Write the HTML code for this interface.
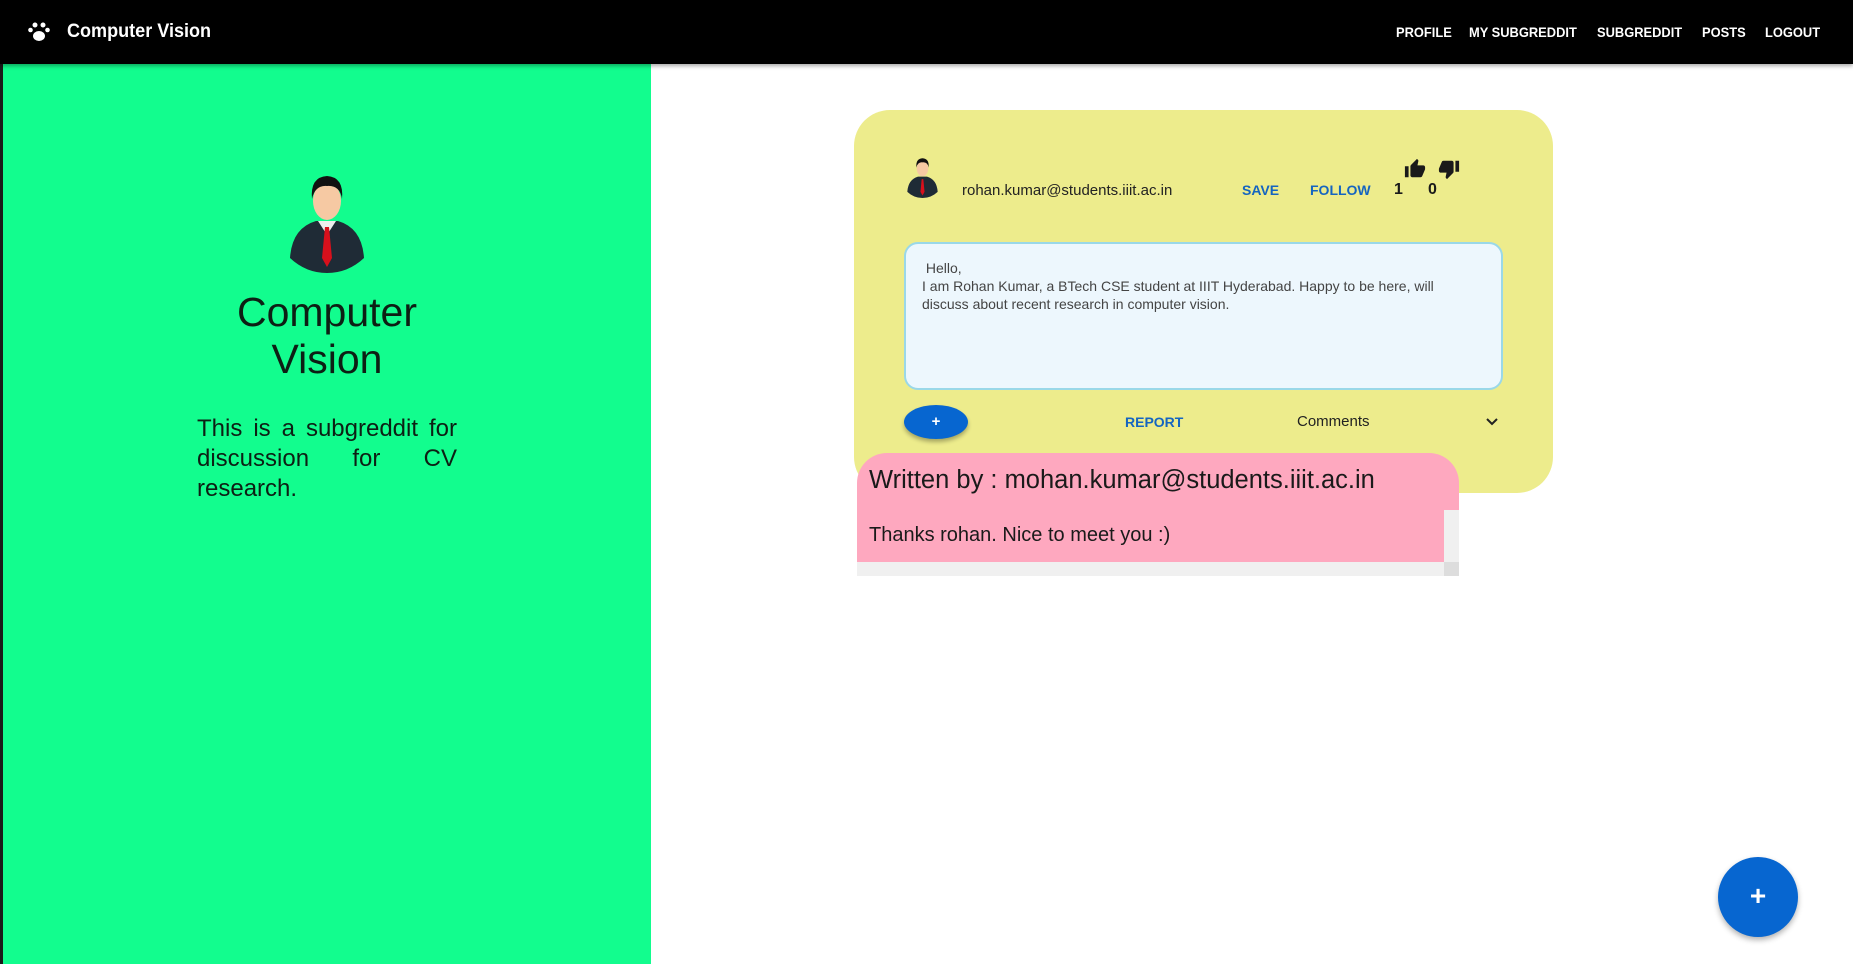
<!DOCTYPE html>
<html><head><meta charset="utf-8"><style>
*{margin:0;padding:0;box-sizing:border-box}
body{width:1853px;height:964px;overflow:hidden;background:#fff;font-family:"Liberation Sans",sans-serif;position:relative}
.a{position:absolute;white-space:nowrap}
#hdr{position:absolute;left:0;top:0;width:1853px;height:64px;background:#000;box-shadow:0 2px 4px rgba(0,0,0,.35);z-index:2}
#hdr .n{position:absolute;top:24px;color:#fff;font-size:14px;font-weight:bold;transform:scaleX(.92);transform-origin:left}
#left{position:absolute;left:0;top:64px;width:651px;height:900px;background:#12fd8e;border-left:3px solid #1a1a1a}
.btn{color:#1565c0;font-size:14px;font-weight:bold}
</style></head><body>
<div id="hdr">
 <svg class="a" style="left:28px;top:21px" width="22" height="21" viewBox="0 0 22 21"><ellipse cx="11" cy="15" rx="6" ry="5" fill="#fff"/><circle cx="7" cy="4" r="2.5" fill="#fff"/><circle cx="15" cy="4" r="2.5" fill="#fff"/><circle cx="2.5" cy="9" r="2.3" fill="#fff"/><circle cx="19.5" cy="9" r="2.3" fill="#fff"/></svg>
 <div class="a" style="left:67px;top:21px;color:#fff;font-size:19px;font-weight:bold;transform:scaleX(.95);transform-origin:left">Computer Vision</div>
 <div class="n" style="left:1396px">PROFILE</div>
 <div class="n" style="left:1469px">MY SUBGREDDIT</div>
 <div class="n" style="left:1597px">SUBGREDDIT</div>
 <div class="n" style="left:1702px">POSTS</div>
 <div class="n" style="left:1765px">LOGOUT</div>
</div>
<div id="left"></div>
<svg class="a" style="left:288px;top:173px" width="78" height="100" viewBox="0 0 78 100">
 <path d="M2 85 Q4 55 28 48 L50 48 Q74 55 76 85 Q60 100 39 100 Q18 100 2 85Z" fill="#1f2b36"/>
 <path d="M30 48 L39 62 L48 48Z" fill="#eee"/>
 <path d="M37 54 L41 54 L44 85 L39 94 L34 85Z" fill="#d8101c"/>
 <ellipse cx="39" cy="28" rx="14" ry="19" fill="#f6c9a3"/>
 <path d="M24 26 Q22 4 39 3 Q56 4 54 26 Q52 12 39 13 Q27 12 24 26Z" fill="#111"/>
</svg>
<div class="a" style="left:3px;width:648px;top:289px;text-align:center;font-size:41px;line-height:47px;color:#0d1f14;white-space:normal">Computer<br>Vision</div>
<div class="a" style="left:197px;top:414px;width:260px;font-size:24px;line-height:30px;color:#0d1f14;white-space:normal;text-align:justify">This is a subgreddit for discussion for CV research.</div>

<div class="a" style="left:854px;top:110px;width:699px;height:383px;background:#edec8c;border-radius:36px"></div>
<svg class="a" style="left:905px;top:157px" width="35" height="41" viewBox="0 0 78 100">
 <path d="M2 85 Q4 55 28 48 L50 48 Q74 55 76 85 Q60 100 39 100 Q18 100 2 85Z" fill="#1f2b36"/>
 <path d="M37 54 L41 54 L44 85 L39 94 L34 85Z" fill="#d8101c"/>
 <ellipse cx="39" cy="28" rx="14" ry="19" fill="#f6c9a3"/>
 <path d="M24 26 Q22 4 39 3 Q56 4 54 26 Q52 12 39 13 Q27 12 24 26Z" fill="#111"/>
</svg>
<div class="a" style="left:962px;top:182px;font-size:15px;color:#222">rohan.kumar@students.iiit.ac.in</div>
<div class="a btn" style="left:1242px;top:182px">SAVE</div>
<div class="a btn" style="left:1310px;top:182px">FOLLOW</div>
<svg class="a" style="left:1403px;top:158px" width="24" height="22" viewBox="0 0 24 24"><path fill="#1a1a1a" d="M1 21h4V9H1v12zm22-11c0-1.1-.9-2-2-2h-6.31l.95-4.57.03-.32c0-.41-.17-.79-.44-1.06L14.17 1 7.590 7.59C7.22 7.95 7 8.45 7 9v10c0 1.1.9 2 2 2h9c.83 0 1.54-.5 1.84-1.22l3.02-7.05c.09-.23.14-.47.14-.73v-2z"/></svg>
<svg class="a" style="left:1437px;top:158px" width="24" height="22" viewBox="0 0 24 24"><path fill="#1a1a1a" d="M15 3H6c-.83 0-1.54.5-1.84 1.22l-3.02 7.050c-.09.23-.14.47-.14.73v2c0 1.1.9 2 2 2h6.31l-.95 4.57-.03.32c0 .41.17.79.44 1.06L9.83 23l6.59-6.59c.36-.36.58-.86.58-1.410V5c0-1.1-.9-2-2-2zm4 0v12h4V3h-4z"/></svg>
<div class="a" style="left:1394px;top:181px;font-size:16px;font-weight:bold;color:#1a1a1a">1</div>
<div class="a" style="left:1428px;top:181px;font-size:16px;font-weight:bold;color:#1a1a1a">0</div>

<div class="a" style="left:904px;top:242px;width:599px;height:148px;background:#edf7fd;border:2px solid #9ad8e8;border-radius:14px"></div>
<div class="a" style="left:922px;top:259px;font-size:14px;line-height:18px;color:#444;white-space:normal;width:580px">&nbsp;Hello,<br>I am Rohan Kumar, a BTech CSE student at IIIT Hyderabad. Happy to be here, will<br>discuss about recent research in computer vision.</div>

<div class="a" style="left:904px;top:405px;width:64px;height:34px;border-radius:50%;background:#0766d0;box-shadow:0 3px 4px rgba(0,0,0,.3);color:#fff;text-align:center;line-height:34px;font-size:15px;font-weight:bold">+</div>
<div class="a btn" style="left:1125px;top:414px">REPORT</div>
<div class="a" style="left:1297px;top:413px;font-size:15px;color:#222">Comments</div>
<svg class="a" style="left:1484px;top:414px" width="16" height="16" viewBox="0 0 16 16"><path d="M3 5 L8 10 L13 5" stroke="#222" stroke-width="2" fill="none"/></svg>

<div class="a" style="left:857px;top:453px;width:602px;height:109px;background:#fea8bf;border-radius:30px 30px 0 30px"></div>
<div class="a" style="left:857px;top:510px;width:602px;height:52px;background:#fea8bf"></div>
<div class="a" style="left:1444px;top:510px;width:15px;height:52px;background:#f0f0f0"></div>
<div class="a" style="left:857px;top:562px;width:602px;height:14px;background:#f0f0f0"></div>
<div class="a" style="left:1444px;top:562px;width:15px;height:14px;background:#ddd"></div>
<div class="a" style="left:869px;top:466px;font-size:25.5px;color:#1a1a1a">Written by : mohan.kumar@students.iiit.ac.in</div>
<div class="a" style="left:869px;top:524px;font-size:20px;color:#1a1a1a">Thanks rohan. Nice to meet you :)</div>

<div class="a" style="left:1718px;top:857px;width:80px;height:80px;border-radius:50%;background:#0766d0;box-shadow:0 3px 6px rgba(0,0,0,.3);color:#fff;text-align:center;line-height:78px;font-size:28px;font-weight:bold">+</div>
</body></html>
